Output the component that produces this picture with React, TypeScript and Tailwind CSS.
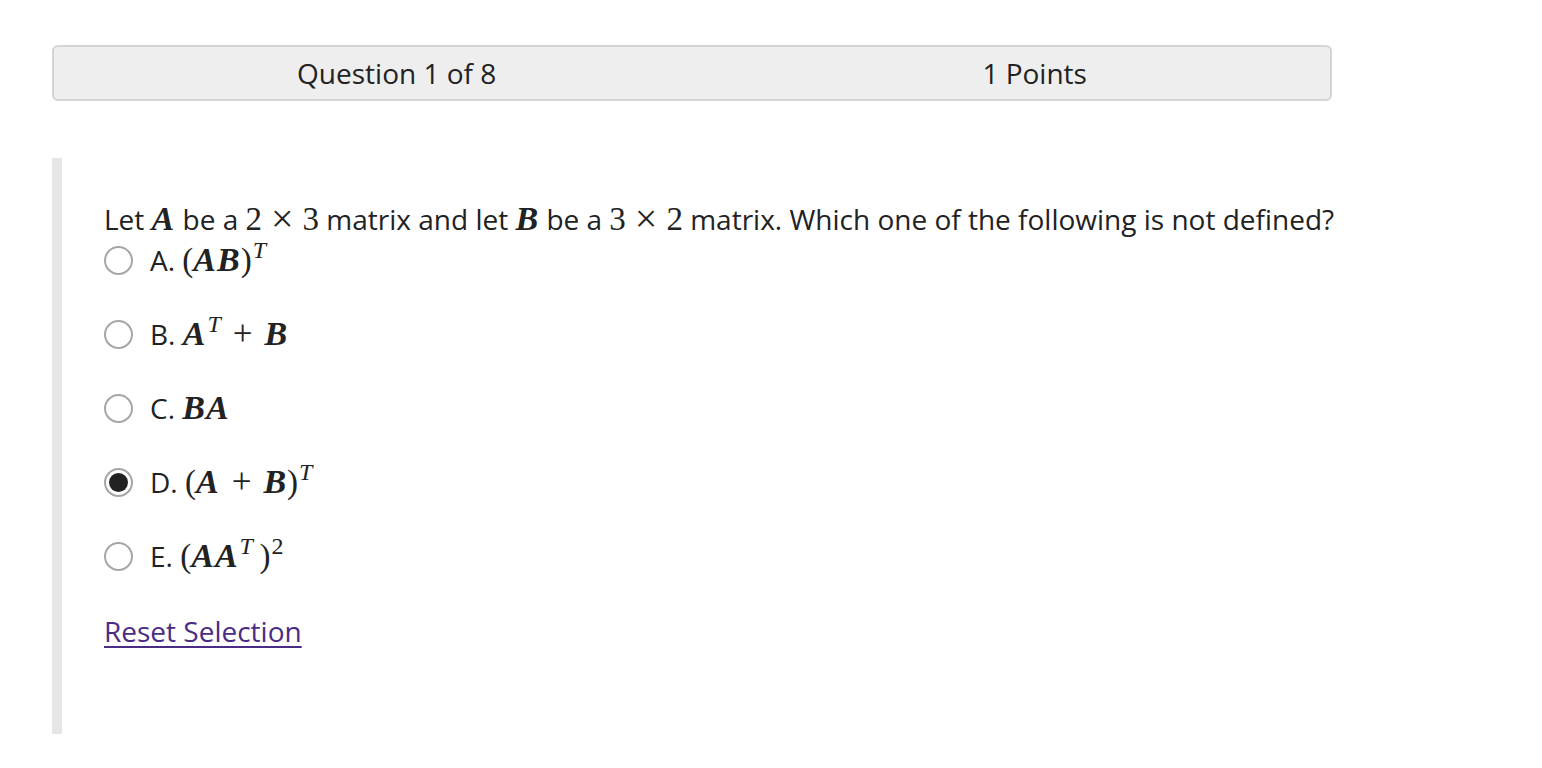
import React from "react";

const serif = { fontFamily: '"Liberation Serif", "Times New Roman", serif' };

const M = ({ children }: { children: React.ReactNode }) => (
  <span className="italic font-bold text-[34px] leading-none tracking-[1px]" style={serif}>{children}</span>
);
const N = ({ children }: { children: React.ReactNode }) => (
  <span className="text-[33px] leading-none" style={serif}>{children}</span>
);
const Times = () => (
  <span className="text-[40px] leading-none mx-[9px] relative top-[2px]" style={serif}>×</span>
);
const Plus = () => (
  <span className="text-[35px] leading-none mx-[12px]" style={serif}>+</span>
);
const Sup = ({ children, italic = true }: { children: React.ReactNode; italic?: boolean }) => (
  <sup className={`${italic ? "italic" : ""} text-[24px] leading-none relative -top-[13px] ml-[1px]`} style={serif}>{children}</sup>
);

function Radio({ checked }: { checked?: boolean }) {
  return (
    <span className="w-[29px] h-[29px] rounded-full border-2 border-[#a6a6a6] bg-white flex items-center justify-center shrink-0">
      {checked && <span className="w-[19px] h-[19px] rounded-full bg-[#222]" />}
    </span>
  );
}

function Option({ letter, checked, children }: { letter: string; checked?: boolean; children: React.ReactNode }) {
  return (
    <label className="flex items-center h-[36px]">
      <Radio checked={checked} />
      <span className="ml-[17px] whitespace-nowrap">{letter}.&nbsp;{children}</span>
    </label>
  );
}

export default function App() {
  return (
    <div className="min-h-screen bg-white text-[#222] text-[28px]" style={{ fontFamily: '"Open Sans", "Noto Sans", sans-serif' }}>
      <div className="pt-[45px] pl-[52px]">
        <div className="w-[1280px] h-[56px] bg-[#eeeeee] border-2 border-[#d4d4d4] rounded-[6px] flex items-center justify-around">
          <span>Question 1 of 8</span>
          <span>1 Points</span>
        </div>
        <div className="mt-[57px] h-[576px] border-l-[10px] border-[#e6e6e6] pl-[42px]">
          <div className="pt-[42px]">
            <p className="h-[36px] flex items-center whitespace-nowrap">
              <span>Let&nbsp;<M>A</M> be a&nbsp;<N>2</N><Times /><N>3</N> matrix and let&nbsp;<M>B</M> be a&nbsp;<N>3</N><Times /><N>2</N> matrix. Which one of the following is not defined?</span>
            </p>
            <div className="mt-[6px] flex flex-col gap-[38px]">
              <Option letter="A"><N>(</N><M>AB</M><N>)</N><Sup>T</Sup></Option>
              <Option letter="B"><M>A</M><Sup>T</Sup><Plus /><M>B</M></Option>
              <Option letter="C"><M>BA</M></Option>
              <Option letter="D" checked><N>(</N><M>A</M><Plus /><M>B</M><N>)</N><Sup>T</Sup></Option>
              <Option letter="E"><N>(</N><M>AA</M><Sup>T</Sup><N>&thinsp;)</N><Sup italic={false}>2</Sup></Option>
            </div>
            <div className="mt-[39px] h-[36px] flex items-center">
              <a href="#" className="text-[#4b2c85] underline underline-offset-[4px] decoration-2">Reset Selection</a>
            </div>
          </div>
        </div>
      </div>
    </div>
  );
}
